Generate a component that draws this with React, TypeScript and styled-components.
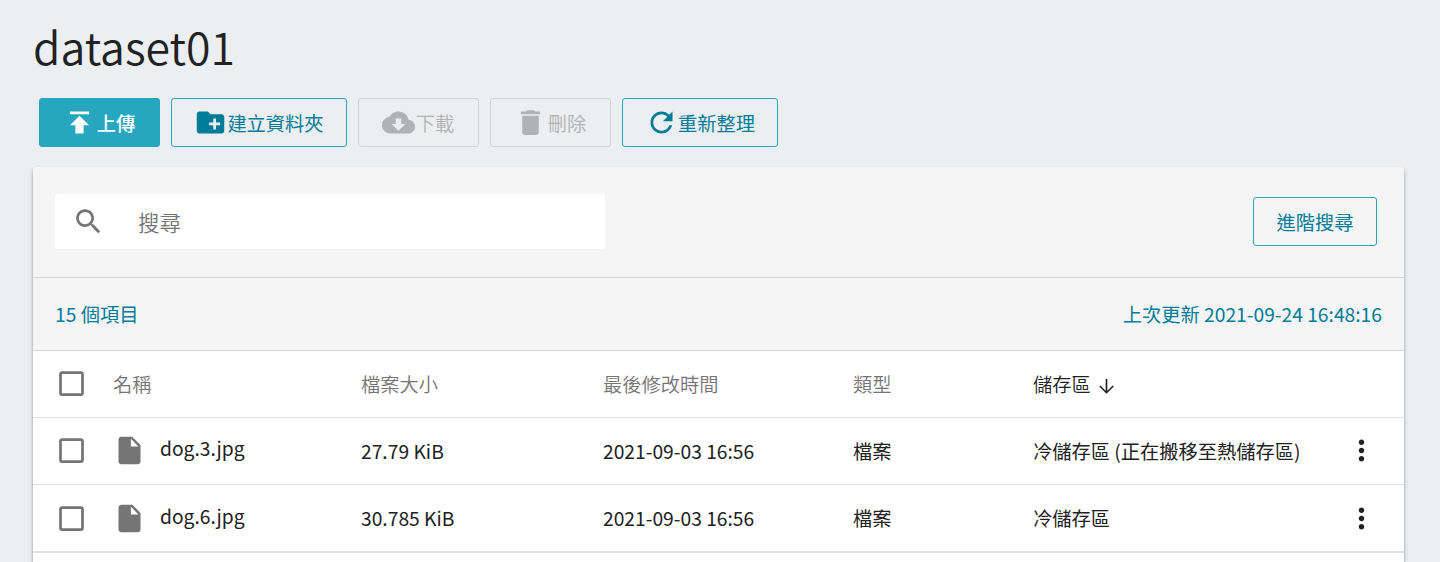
import React from "react";
import styled, { createGlobalStyle, css } from "styled-components";

const Global = createGlobalStyle`
  * { box-sizing: border-box; }
  body { margin: 0; background: #ebeff2; overflow: hidden; }
`;
const Page = styled.main`
  height: 562px;
  overflow: hidden;
  background: #ebeff2;
  padding: 0 36px 0 33px;
  font-family: "Noto Sans CJK TC", sans-serif;
  font-size: 19.25px;
  color: #212121;
`;
const Title = styled.h1`
  margin: 0;
  height: 98px;
  padding-top: 11px;
  line-height: 70px;
  font-size: 44.6px;
  font-weight: 350;
`;
const Toolbar = styled.div`
  display: flex;
  gap: 11px;
  padding-left: 6px;
  height: 69px;
`;
const Button = styled.button<{ $kind?: "primary" | "disabled"; $width: number }>`
  display: flex;
  align-items: center;
  justify-content: center;
  width: ${(p) => p.$width}px;
  height: 49px;
  padding: 0;
  border: 1px solid #26a6bf;
  border-radius: 3px;
  background: transparent;
  color: #007b98;
  font: 400 19.25px/28px "Noto Sans CJK TC", sans-serif;
  white-space: nowrap;
  svg { flex: none; margin: 0 0.5px 0 -0.5px; }
  ${(p) => p.$kind === "primary" && css`background: #26a6bf; color: #fff; font-weight: 500;`}
  ${(p) => p.$kind === "disabled" && css`border-color: #cfd3d5; color: #b0b2b4; font-weight: 350;`}
`;
const Card = styled.section`
  width: 1371px;
  height: 420px;
  background: #fff;
  border-radius: 4px 4px 0 0;
  box-shadow: 0 3px 4px rgba(0, 0, 0, 0.28), 0 1px 2px rgba(0, 0, 0, 0.18);
`;
const SearchBar = styled.div`
  display: flex;
  justify-content: space-between;
  align-items: flex-start;
  height: 111px;
  padding: 27px 27px 0 22px;
  background: #f5f5f5;
  border-radius: 4px 4px 0 0;
  border-bottom: 1px solid #d6d6d6;
  ${Button} { margin-top: 3px; }
`;
const SearchBox = styled.label`
  display: flex;
  align-items: center;
  width: 550px;
  height: 55px;
  padding-left: 16.5px;
  gap: 33.5px;
  background: #fff;
  border-radius: 3px;
  color: #757575;
  font-size: 21.5px;
  font-weight: 350;
`;
const Placeholder = styled.span`
  padding-bottom: 1px;
`;
const Summary = styled.div`
  display: flex;
  justify-content: space-between;
  height: 73px;
  padding: 0 22px;
  line-height: 72px;
  background: #f5f5f5;
  border-bottom: 1px solid #d6d6d6;
  color: #007b98;
`;
const Row = styled.div<{ $head?: boolean }>`
  display: grid;
  grid-template-columns: 80px 248px 242px 250px 180px 312px 1fr;
  align-items: center;
  height: 67px;
  border-bottom: 1px solid #e0e0e0;
  font-weight: ${(p) => (p.$head ? 350 : 400)};
  color: ${(p) => (p.$head ? "#757575" : "#212121")};
  svg { display: block; }
  &:last-child { height: 68px; border-bottom-width: 2px; }
`;
const Cell = styled.div<{ $active?: boolean; $raised?: boolean }>`
  display: flex;
  align-items: center;
  gap: ${(p) => (p.$active ? 8 : 0)}px;
  white-space: nowrap;
  ${(p) => p.$active && css`color: #212121;`}
  ${(p) => p.$raised && css`padding-bottom: 2px;`}
`;
const CheckCell = styled(Cell)`
  padding-left: 22px;
`;
const FileName = styled.span`
  padding: 0 0 4px 14px;
`;
const SortIcon = styled.svg`
  margin-top: 4px;
`;

const Icon = ({ d, size = 33, color = "currentColor" }: { d: string; size?: number; color?: string }) => (
  <svg width={size} height={size} viewBox="0 0 24 24" fill={color}><path d={d} /></svg>
);
const paths = {
  upload: "M5 4v2h14V4H5zm0 10h4v6h6v-6h4l-7-7-7 7z",
  folder: "M20 6h-8l-2-2H4c-1.11 0-1.99.89-1.99 2L2 18c0 1.11.89 2 2 2h16c1.11 0 2-.89 2-2V8c0-1.11-.89-2-2-2zm-1 8h-3v3h-2v-3h-3v-2h3V9h2v3h3v2z",
  cloud: "M19.35 10.04C18.67 6.59 15.64 4 12 4 9.11 4 6.6 5.64 5.35 8.04 2.34 8.36 0 10.91 0 14c0 3.31 2.69 6 6 6h13c2.76 0 5-2.24 5-5 0-2.64-2.05-4.78-4.65-4.96zM17 13l-5 5-5-5h3V9h4v4h3z",
  trash: "M6 19c0 1.1.9 2 2 2h8c1.1 0 2-.9 2-2V7H6v12zM19 4h-3.5l-1-1h-5l-1 1H5v2h14V4z",
  refresh: "M17.65 6.35C16.2 4.9 14.21 4 12 4c-4.42 0-7.99 3.58-7.99 8s3.57 8 7.99 8c3.73 0 6.84-2.55 7.73-6h-2.08c-.82 2.33-3.04 4-5.65 4-3.31 0-6-2.69-6-6s2.69-6 6-6c1.66 0 3.14.69 4.22 1.78L13 11h7V4l-2.35 2.35z",
  search: "M15.5 14h-.79l-.28-.27C15.41 12.59 16 11.11 16 9.5 16 5.91 13.09 3 9.5 3S3 5.91 3 9.5 5.91 16 9.5 16c1.61 0 3.09-.59 4.23-1.57l.27.28v.79l5 4.99L20.49 19l-4.99-5zm-6 0C7.01 14 5 11.99 5 9.5S7.01 5 9.5 5 14 7.01 14 9.5 11.99 14 9.5 14z",
  box: "M19 5v14H5V5h14m0-2H5c-1.1 0-2 .9-2 2v14c0 1.1.9 2 2 2h14c1.1 0 2-.9 2-2V5c0-1.1-.9-2-2-2z",
  file: "M6 2c-1.1 0-1.99.9-1.99 2L4 20c0 1.1.89 2 1.99 2H18c1.1 0 2-.9 2-2V8l-6-6H6zm7 7V3.5L18.500 9H13z",
  more: "M12 8c1.1 0 2-.9 2-2s-.9-2-2-2-2 .9-2 2 .9 2 2 2zm0 2c-1.1 0-2 .9-2 2s.9 2 2 2 2-.9 2-2-.9-2-2-2zm0 6c-1.1 0-2 .9-2 2s.9 2 2 2 2-.9 2-2-.9-2-2-2z",
};
const files = [
  { name: "dog.3.jpg", size: "27.79 KiB", zone: "冷儲存區 (正在搬移至熱儲存區)" },
  { name: "dog.6.jpg", size: "30.785 KiB", zone: "冷儲存區" },
];

export default function App() {
  return (
    <Page>
      <Global />
      <Title>dataset01</Title>
      <Toolbar>
        <Button $kind="primary" $width={121}><Icon d={paths.upload} />上傳</Button>
        <Button $width={176}><Icon d={paths.folder} />建立資料夾</Button>
        <Button $kind="disabled" $width={121}><Icon d={paths.cloud} />下載</Button>
        <Button $kind="disabled" $width={121}><Icon d={paths.trash} />刪除</Button>
        <Button $width={156}><Icon d={paths.refresh} />重新整理</Button>
      </Toolbar>
      <Card>
        <SearchBar>
          <SearchBox><Icon d={paths.search} /><Placeholder>搜尋</Placeholder></SearchBox>
          <Button $width={124}>進階搜尋</Button>
        </SearchBar>
        <Summary><span>15 個項目</span><span>上次更新 2021-09-24 16:48:16</span></Summary>
        <Row $head>
          <CheckCell $raised><Icon d={paths.box} color="#757575" /></CheckCell>
          <Cell>名稱</Cell><Cell>檔案大小</Cell><Cell>最後修改時間</Cell><Cell>類型</Cell>
          <Cell $active>
            儲存區
            <SortIcon width="15" height="15" viewBox="0 0 15 15" fill="none" stroke="currentColor" strokeWidth="1.6">
              <path d="M7.500 0v13.500M.8 7l6.700 6.700L14.200 7" />
            </SortIcon>
          </Cell>
        </Row>
        {files.map((f, i) => (
          <Row key={f.name}>
            <CheckCell $raised={i === 0}><Icon d={paths.box} color="#757575" /></CheckCell>
            <Cell $raised={i === 0}><Icon d={paths.file} color="#757575" /><FileName>{f.name}</FileName></Cell>
            <Cell>{f.size}</Cell><Cell>2021-09-03 16:56</Cell><Cell>檔案</Cell><Cell>{f.zone}</Cell>
            <Cell $raised={i === 0}><Icon d={paths.more} /></Cell>
          </Row>
        ))}
      </Card>
    </Page>
  );
}
